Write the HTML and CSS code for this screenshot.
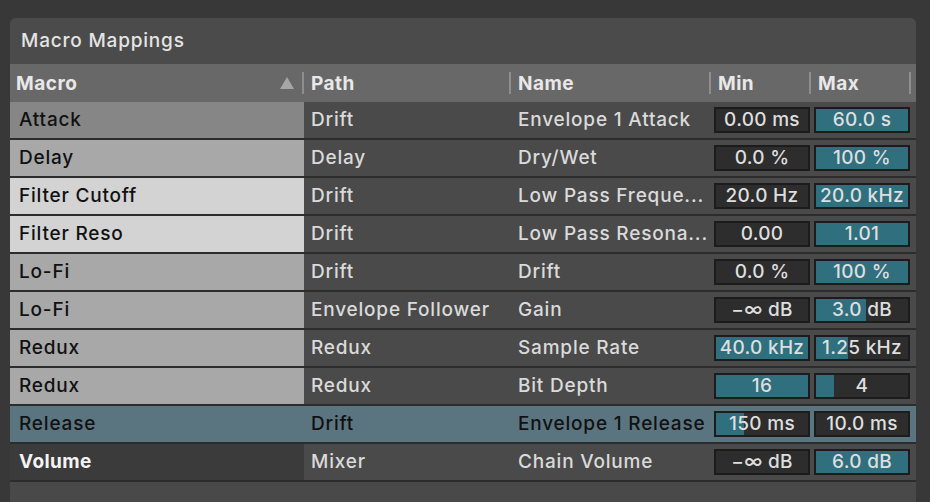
FILE: index.html
```html
<!DOCTYPE html>
<html>
<head>
<meta charset="utf-8">
<link rel="stylesheet" href="styles.css">
</head>
<body>
<div class="panel">
  <div class="title">Macro Mappings</div>
  <div class="table">
    <div class="row head">
      <div class="hc macro-h"><span>Macro</span><span class="tri"></span></div>
      <div class="hc">Path</div>
      <div class="hc">Name</div>
      <div class="hc">Min</div>
      <div class="hc">Max</div>
      <div></div>
    </div>

    <div class="row">
      <div class="mc m-dim">Attack</div>
      <div class="tc">Drift</div>
      <div class="tc">Envelope 1 Attack</div>
      <div class="bc"><div class="box"><span>0.00 ms</span></div></div>
      <div class="bc"><div class="box"><div class="fill" style="width:100%"></div><span>60.0 s</span></div></div>
      <div></div>
    </div>

    <div class="row">
      <div class="mc m-mid">Delay</div>
      <div class="tc">Delay</div>
      <div class="tc">Dry/Wet</div>
      <div class="bc"><div class="box"><span>0.0 %</span></div></div>
      <div class="bc"><div class="box"><div class="fill" style="width:100%"></div><span>100 %</span></div></div>
      <div></div>
    </div>

    <div class="row">
      <div class="mc m-light">Filter Cutoff</div>
      <div class="tc">Drift</div>
      <div class="tc">Low Pass Freque...</div>
      <div class="bc"><div class="box"><span>20.0 Hz</span></div></div>
      <div class="bc"><div class="box"><div class="fill" style="width:100%"></div><span>20.0 kHz</span></div></div>
      <div></div>
    </div>

    <div class="row">
      <div class="mc m-light">Filter Reso</div>
      <div class="tc">Drift</div>
      <div class="tc">Low Pass Resona...</div>
      <div class="bc"><div class="box"><span>0.00</span></div></div>
      <div class="bc"><div class="box"><div class="fill" style="width:100%"></div><span>1.01</span></div></div>
      <div></div>
    </div>

    <div class="row">
      <div class="mc m-mid">Lo-Fi</div>
      <div class="tc">Drift</div>
      <div class="tc">Drift</div>
      <div class="bc"><div class="box"><span>0.0 %</span></div></div>
      <div class="bc"><div class="box"><div class="fill" style="width:100%"></div><span>100 %</span></div></div>
      <div></div>
    </div>

    <div class="row">
      <div class="mc m-mid">Lo-Fi</div>
      <div class="tc">Envelope Follower</div>
      <div class="tc">Gain</div>
      <div class="bc"><div class="box"><span>−∞ dB</span></div></div>
      <div class="bc"><div class="box"><div class="fill" style="width:54%"></div><span>3.0 dB</span></div></div>
      <div></div>
    </div>

    <div class="row">
      <div class="mc m-mid">Redux</div>
      <div class="tc">Redux</div>
      <div class="tc">Sample Rate</div>
      <div class="bc"><div class="box"><div class="fill" style="width:100%"></div><span>40.0 kHz</span></div></div>
      <div class="bc"><div class="box"><div class="fill" style="width:35%"></div><span>1.25 kHz</span></div></div>
      <div></div>
    </div>

    <div class="row">
      <div class="mc m-mid">Redux</div>
      <div class="tc">Redux</div>
      <div class="tc">Bit Depth</div>
      <div class="bc"><div class="box"><div class="fill" style="width:100%"></div><span>16</span></div></div>
      <div class="bc"><div class="box"><div class="fill" style="width:20%"></div><span>4</span></div></div>
      <div></div>
    </div>

    <div class="row sel">
      <div class="mc">Release</div>
      <div class="tc">Drift</div>
      <div class="tc">Envelope 1 Release</div>
      <div class="bc"><div class="box"><div class="fill" style="width:30%"></div><span>150 ms</span></div></div>
      <div class="bc"><div class="box"><span>10.0 ms</span></div></div>
      <div></div>
    </div>

    <div class="row">
      <div class="mc m-dark">Volume</div>
      <div class="tc">Mixer</div>
      <div class="tc">Chain Volume</div>
      <div class="bc"><div class="box"><span>−∞ dB</span></div></div>
      <div class="bc"><div class="box"><div class="fill" style="width:100%"></div><span>6.0 dB</span></div></div>
      <div></div>
    </div>
  </div>
</div>
</body>
</html>
```

FILE: styles.css
```css
html, body {
  margin: 0;
  padding: 0;
}
body {
  background: #383838;
  width: 930px;
  height: 502px;
  overflow: hidden;
  font-family: Inter, "Noto Sans", sans-serif;
  font-size: 19px;
  font-weight: 500;
  letter-spacing: 0.8px;
}
.panel {
  margin: 18px 0 0 10px;
  width: 906px;
  height: 484px;
  background: #494949;
  border-radius: 6px 6px 0 0;
  overflow: hidden;
}
.title {
  height: 46px;
  display: flex;
  align-items: center;
  padding-left: 11px;
  color: #e4e4e4;
  background: #4b4b4b;
  padding-bottom: 1px;
  box-sizing: border-box;
}
.table {
  display: flex;
  flex-direction: column;
}
.row {
  display: grid;
  grid-template-columns: 294px 207px 200px 100px 100px 5px;
  height: 36px;
  border-bottom: 2px solid #2c2c2c;
  background: #4a4a4a;
  color: #dadada;
  line-height: 1;
}
.row.head {
  height: 38px;
  border-bottom: none;
  background: #686868;
  color: #e8e8e8;
  font-weight: 700;
  letter-spacing: 0.5px;
}
.hc {
  display: flex;
  align-items: center;
  padding-left: 7px;
  position: relative;
}
.hc::after {
  content: "";
  position: absolute;
  right: 0;
  top: 8px;
  bottom: 8px;
  width: 2px;
  background: #8e8e8e;
}
.macro-h {
  padding-left: 6px;
  justify-content: space-between;
  padding-right: 10px;
}
.tri {
  width: 0;
  height: 0;
  border-left: 7px solid transparent;
  border-right: 7px solid transparent;
  border-bottom: 12px solid #a6a6a6;
}
.mc {
  display: flex;
  align-items: center;
  padding-left: 9px;
  color: #111;
  padding-bottom: 1px;
}
.m-dim { background: #868686; }
.m-mid { background: #a8a8a8; }
.m-light { background: #d3d3d3; }
.m-dark { background: #3b3b3b; color: #f4f4f4; font-weight: 700; letter-spacing: 0.4px; }
.tc {
  display: flex;
  align-items: center;
  padding-left: 7px;
  white-space: nowrap;
  overflow: hidden;
  padding-bottom: 1px;
}
.bc {
  display: flex;
  align-items: center;
  padding-left: 3px;
  padding-bottom: 1px;
}
.box {
  position: relative;
  width: 92px;
  height: 22px;
  border: 2px solid #1c1c1c;
  background: #2d2d2d;
  display: flex;
  align-items: center;
  justify-content: center;
  color: #dedede;
  letter-spacing: 0.3px;
}
.fill {
  position: absolute;
  left: 0;
  top: 0;
  bottom: 0;
  background: #2f6f7e;
}
.box span {
  position: relative;
}
.row.sel {
  background: #5b7580;
  color: #111;
}
```
